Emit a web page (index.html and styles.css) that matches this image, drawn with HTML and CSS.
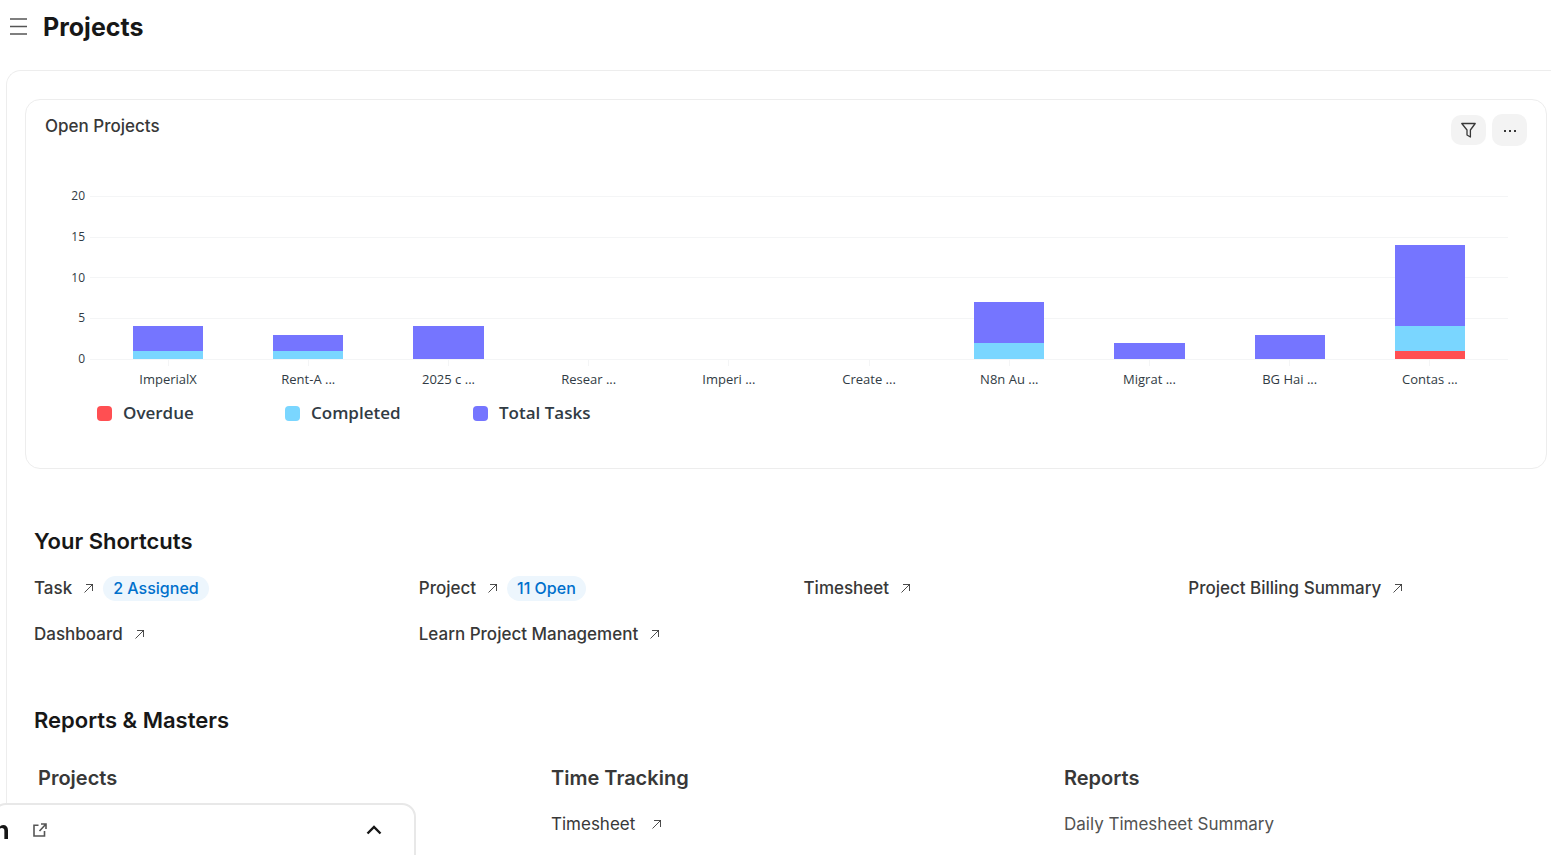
FILE: index.html
```html
<!DOCTYPE html>
<html lang="en">
<head>
<meta charset="utf-8">
<title>Projects</title>
<link rel="stylesheet" href="styles.css">
</head>
<body>
<svg class="defs" aria-hidden="true">
  <symbol id="arrow" viewBox="0 0 10 10"><path d="M0.5 9.5 9 1M2 1.5H8.5V8" fill="none" stroke="currentColor" stroke-width="0.9"/></symbol>
</svg>
<header class="page-head">
  <button class="menu" aria-label="Toggle sidebar"><svg width="18" height="18" viewBox="0 0 18 18"><path d="M0 1H17M0 8.5H17M0 16H17" stroke="#555" stroke-width="1.4"/></svg></button>
  <h1>Projects</h1>
</header>
<main class="workspace">
  <section class="chart-card">
    <div class="card-head">
      <h2>Open Projects</h2>
      <div class="actions">
        <button class="filter" aria-label="Filter"><svg width="16" height="16" viewBox="0 0 16 16"><path d="M0.8 1.5H14.2L9.4 8V15L6 13V8Z" fill="none" stroke="#383838" stroke-width="1.3" stroke-linejoin="round"/></svg></button>
        <button class="more" aria-label="More options"><svg width="14" height="4" viewBox="0 0 14 4"><path d="M1 2h2v2H1zM6 2h2v2H6zM11 2h2v2h-2z" fill="#383838"/></svg></button>
      </div>
    </div>
    <div class="chart">
      <div class="y-axis"><span>20</span><span>15</span><span>10</span><span>5</span><span>0</span></div>
      <div class="plot">
        <div class="column"><div class="stack"><i class="total" style="height:15%"></i><i class="completed" style="height:5%"></i></div><span>ImperialX</span></div>
        <div class="column"><div class="stack"><i class="total" style="height:10%"></i><i class="completed" style="height:5%"></i></div><span>Rent-A ...</span></div>
        <div class="column"><div class="stack"><i class="total" style="height:20%"></i></div><span>2025 c ...</span></div>
        <div class="column"><div class="stack"></div><span>Resear ...</span></div>
        <div class="column"><div class="stack"></div><span>Imperi ...</span></div>
        <div class="column"><div class="stack"></div><span>Create ...</span></div>
        <div class="column"><div class="stack"><i class="total" style="height:25%"></i><i class="completed" style="height:10%"></i></div><span>N8n Au ...</span></div>
        <div class="column"><div class="stack"><i class="total" style="height:10%"></i></div><span>Migrat ...</span></div>
        <div class="column"><div class="stack"><i class="total" style="height:15%"></i></div><span>BG Hai ...</span></div>
        <div class="column"><div class="stack"><i class="total" style="height:50%"></i><i class="completed" style="height:15%"></i><i class="overdue" style="height:5%"></i></div><span>Contas ...</span></div>
      </div>
    </div>
    <ul class="legend">
      <li><i class="overdue"></i>Overdue</li>
      <li><i class="completed"></i>Completed</li>
      <li><i class="total"></i>Total Tasks</li>
    </ul>
  </section>
  <section class="shortcuts">
    <h2>Your Shortcuts</h2>
    <div class="shortcut-grid">
      <div class="item"><a href="#">Task<svg class="arrow"><use href="#arrow"/></svg></a><span class="badge">2 Assigned</span></div>
      <div class="item"><a href="#">Project<svg class="arrow"><use href="#arrow"/></svg></a><span class="badge">11 Open</span></div>
      <div class="item"><a href="#">Timesheet<svg class="arrow"><use href="#arrow"/></svg></a></div>
      <div class="item"><a href="#">Project Billing Summary<svg class="arrow"><use href="#arrow"/></svg></a></div>
      <div class="item"><a href="#">Dashboard<svg class="arrow"><use href="#arrow"/></svg></a></div>
      <div class="item"><a href="#">Learn Project Management<svg class="arrow"><use href="#arrow"/></svg></a></div>
    </div>
  </section>
  <section class="masters">
    <h2>Reports &amp; Masters</h2>
    <div class="master-grid">
      <div><h3>Projects</h3></div>
      <div><h3>Time Tracking</h3><a href="#">Timesheet<svg class="arrow"><use href="#arrow"/></svg></a></div>
      <div><h3>Reports</h3><a href="#" class="muted">Daily Timesheet Summary</a></div>
    </div>
  </section>
</main>
<aside class="popup">
  <strong>n</strong>
  <a href="#" aria-label="Open in new tab"><svg width="14" height="14" viewBox="0 0 14 14"><path d="M5.5 2.2H1V13H11.5V8M8 1H13V6M13 1 6.5 8" fill="none" stroke="#555" stroke-width="1.6"/></svg></a>
  <button aria-label="Expand"><svg width="16" height="10" viewBox="0 0 16 10"><path d="M1.5 8.5 8 2 14.5 8.5" fill="none" stroke="#171717" stroke-width="2.4"/></svg></button>
</aside>
</body>
</html>
```
FILE: styles.css
```css
* { box-sizing: border-box; }
body {
  margin: 0;
  height: 100vh;
  overflow: hidden;
  display: flex;
  flex-direction: column;
  background: #fff;
  color: #383838;
  font: 420 17px/24px Inter, sans-serif;
}
h1, h2, h3, ul { margin: 0; padding: 0; }
button { border: 0; padding: 0; background: none; display: flex; align-items: center; justify-content: center; }
svg { display: block; }
a { color: inherit; text-decoration: none; }
.defs { position: absolute; width: 0; height: 0; }

.page-head { display: flex; align-items: center; gap: 15px; height: 54px; padding-left: 10px; flex: none; }
.page-head h1 { font-size: 25px; font-weight: 700; line-height: 32px; color: #171717; }

.workspace {
  flex: 1 0 auto;
  margin: 16px 0 0 6px;
  padding: 28px 4px 0 18px;
  border: 1px solid #ededed;
  border-width: 1px 0 0 1px;
  border-top-left-radius: 15px;
}

.chart-card { border: 1px solid #ededed; border-radius: 15px; padding: 14px 19px 42px; }
.card-head { display: flex; justify-content: space-between; align-items: flex-start; }
.card-head h2 { font-size: 17px; font-weight: 450; line-height: 24px; }
.actions { display: flex; align-items: center; gap: 6px; }
.actions button { width: 35px; border-radius: 10px; background: #f3f3f3; }
.filter { height: 30px; }
.more { height: 32px; }

.chart { display: flex; gap: 5px; margin-top: 50px; padding: 0 19px 0 0; font: 12px/16px "Open Sans", sans-serif; color: #313b44; }
.y-axis { width: 40px; height: 179px; margin-top: -8px; display: flex; flex-direction: column; justify-content: space-between; text-align: right; }
.plot {
  flex: 1;
  display: grid;
  grid-template-columns: repeat(10, 1fr);
  padding: 0 8px;
  background:
    linear-gradient(#f4f5f6, #f4f5f6) 0 163px / 100% 1px no-repeat,
    repeating-linear-gradient(#f4f5f6 0 1px, transparent 1px 25%) top / 100% 163px no-repeat;
}
.column { display: flex; flex-direction: column; align-items: center; }
.stack { width: 50%; height: 163px; display: flex; flex-direction: column; justify-content: flex-end; }
.column::after { content: ""; order: 1; width: 1px; height: 7px; background: #f4f5f6; }
.column span { order: 2; margin-top: 5px; font-size: 13px; }
.total { background: #7575ff; }
.completed { background: #7ad6ff; }
.overdue { background: #ff4f52; }

.legend { display: flex; list-style: none; margin-top: 13px; padding-left: 52px; font: 600 17px/26px "Open Sans", sans-serif; color: #313b44; }
.legend li { width: 188px; display: flex; align-items: center; gap: 11px; }
.legend i { width: 15px; height: 15px; border-radius: 4px; }

.shortcuts, .masters { padding: 0 10px 0 9px; }
.shortcuts h2, .masters h2 { font-size: 22px; font-weight: 600; line-height: 30px; color: #171717; }
.shortcuts { margin-top: 57px; }
.shortcut-grid { display: grid; grid-template-columns: repeat(4, 1fr); gap: 20px 36px; margin-top: 19px; }
.item { display: flex; align-items: center; gap: 9px; height: 26px; font-weight: 450; white-space: nowrap; }
.item a { display: flex; align-items: center; gap: 12px; }
.arrow { width: 10px; height: 10px; }
.badge { padding: 0 10px; border-radius: 13px; font-size: 16px; font-weight: 500; line-height: 25px; background: #edf6fd; color: #0070cc; }

.masters { margin-top: 58px; }
.master-grid { display: grid; grid-template-columns: repeat(3, 1fr); gap: 36px; margin: 29px -4px 0 4px; }
.master-grid h3 { font-size: 20px; font-weight: 600; line-height: 28px; }
.master-grid a { display: flex; align-items: center; gap: 17px; margin-top: 20px; }
.master-grid .muted { color: #525252; }

.popup {
  position: fixed;
  left: -8px;
  bottom: -14px;
  width: 424px;
  height: 66px;
  padding: 0 32px 12px 0;
  display: flex;
  align-items: center;
  background: #fff;
  border: 2px solid #e8e8e8;
  border-radius: 14px;
}
.popup strong { font-size: 25px; line-height: 32px; color: #171717; }
.popup a { margin-left: 23px; }
.popup button { margin-left: auto; }
```
